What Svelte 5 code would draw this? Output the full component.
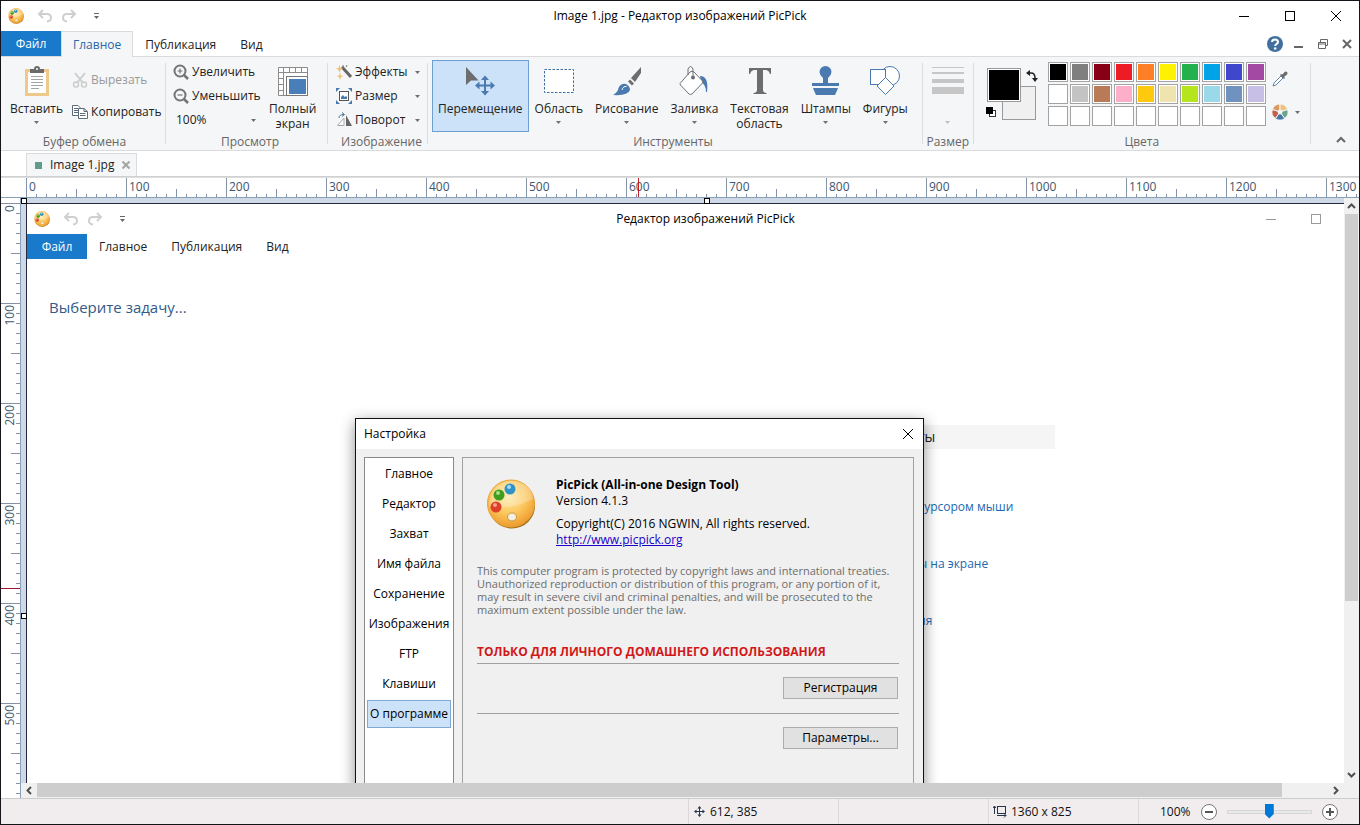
<script>
  const paletteRows = [
    ['#000000', '#7f7f7f', '#880015', '#ed1c24', '#ff7f27', '#fff200', '#22b14c', '#00a2e8', '#3f48cc', '#a349a4'],
    ['#ffffff', '#c3c3c3', '#b97a57', '#ffaec9', '#ffc90e', '#efe4b0', '#b5e61d', '#99d9ea', '#7092be', '#c8bfe7'],
    ['#ffffff', '#ffffff', '#ffffff', '#ffffff', '#ffffff', '#ffffff', '#ffffff', '#ffffff', '#ffffff', '#ffffff']
  ];
  const tools = [
    { id: 'move', label: 'Перемещение', active: true, menu: false },
    { id: 'region', label: 'Область', menu: true },
    { id: 'brush', label: 'Рисование', menu: true },
    { id: 'fill', label: 'Заливка', menu: true },
    { id: 'text', label: 'Текстовая область', menu: false },
    { id: 'stamp', label: 'Штампы', menu: true },
    { id: 'shapes', label: 'Фигуры', menu: true }
  ];
  const sections = ['Главное', 'Редактор', 'Захват', 'Имя файла', 'Сохранение', 'Изображения', 'FTP', 'Клавиши', 'О программе'];
  let workWidth = $state(0);
  let workHeight = $state(0);
  let zoom = $state(50);
  const range = (n) => Array.from({ length: Math.max(0, n) }, (_, i) => i);
  const columns = $derived(range(Math.ceil((workWidth - 25) / 10)));
  const rows = $derived(range(Math.ceil((workHeight - 26) / 10)));
  const tickSize = (i) => (i % 10 === 0 ? 20 : i % 5 === 0 ? 9 : 4);
</script>

{#snippet palette(size)}
  <svg width={size} height={size} viewBox="0 0 50 50" aria-hidden="true">
    <defs>
      <radialGradient id="gold" cx="45%" cy="35%" r="65%">
        <stop offset="0" stop-color="#ffe9a8" />
        <stop offset="0.55" stop-color="#fbc860" />
        <stop offset="1" stop-color="#ee9b2c" />
      </radialGradient>
    </defs>
    <ellipse cx="26" cy="27" rx="23" ry="22.500" fill="#a8701c" />
    <circle cx="25" cy="24.500" r="23.500" fill="url(#gold)" stroke="#e9a236" />
    <path d="M3 27 Q24 32 47 20 Q46 3 25 2 Q5 4 3 27Z" fill="#fff" opacity=".25" />
    <ellipse cx="26" cy="38" rx="4.500" ry="4" fill="#f4efe2" stroke="#c79a48" />
    <circle cx="24" cy="10" r="5.500" fill="#2f93c8" /><circle cx="23" cy="8" r="2" fill="#a9dcf2" />
    <circle cx="13" cy="16" r="5.500" fill="#3f9e1f" /><circle cx="12" cy="14" r="2" fill="#a5dd84" />
    <circle cx="10" cy="28" r="5.500" fill="#dd4029" /><circle cx="9" cy="26" r="2" fill="#f7a08e" />
  </svg>
{/snippet}

{#snippet undo()}
  <svg width="16" height="14" viewBox="0 0 16 14" fill="none" stroke="#cfcfcf" stroke-width="2" aria-hidden="true">
    <path d="M6 1 L2 5 L6 9 M2 5 H10 Q14 5 14 9 Q14 12 10 12.500" />
  </svg>
{/snippet}

{#snippet redo()}
  <svg width="16" height="14" viewBox="0 0 16 14" fill="none" stroke="#cfcfcf" stroke-width="2" aria-hidden="true">
    <path d="M10 1 L14 5 L10 9 M14 5 H6 Q2 5 2 9 Q2 12 6 12.500" />
  </svg>
{/snippet}

{#snippet quick()}
  <div class="quick">
    {@render palette(16)}
    <button aria-label="Отменить">{@render undo()}</button>
    <button aria-label="Повторить">{@render redo()}</button>
    <button class="more" aria-label="Настроить панель">
      <svg width="7" height="7" viewBox="0 0 7 7" aria-hidden="true"><path d="M1 .5H6" stroke="#666" /><path d="M1 3H6L3.500 6Z" fill="#666" /></svg>
    </button>
  </div>
{/snippet}

{#snippet arrow()}
  <svg class="arrow" width="5" height="3" viewBox="0 0 5 3" aria-hidden="true"><path d="M0 0H5L2.500 3Z" fill="currentColor" /></svg>
{/snippet}

{#snippet toolIcon(id)}
  <svg width="32" height="32" viewBox="0 0 32 32" aria-hidden="true">
    {#if id === 'move'}
      <path d="M2 2 V20 L7 15.500 H14.500Z" fill="#6d6d6d" />
      <path d="M21 13V28 M13.500 20.500H29" stroke="#4a7ab0" stroke-width="2" />
      <path d="M21 10.500 L25 15H17Z M21 30.500 L25 26H17Z M11 20.500 L15.500 16.500V24.500Z M31 20.500 L26.500 16.500V24.500Z" fill="#4a7ab0" />
    {:else if id === 'region'}
      <rect x="1.500" y="4.500" width="29" height="23" fill="#fff" stroke="#3f6fa5" stroke-dasharray="2.500 1.500" />
    {:else if id === 'brush'}
      <path d="M30 2 L20 13 L24 17 L30 8Z M19 14.500 L23 18.500 L21 20.500 L17 16.500Z" fill="#6d6d6d" />
      <path d="M2 30 Q7 27 7.500 23 Q10 18 15 19 Q19 21 19 25 Q17 31 2 30Z" fill="#4a7ab0" />
      <path d="M11 25 Q12 21 15.500 21.500" fill="none" stroke="#fff" />
    {:else if id === 'fill'}
      <path d="M22 11 Q31 11 29 27 H28 Q28 20 23 17Z" fill="#4a7ab0" />
      <path d="M2 18.500 L12 7 Q14 5.500 16 7 L24.500 16 Q25 17.500 24 18.500 L14 29 Q12.500 30 11 29 L2.500 20Z" fill="#fff" stroke="#707070" />
      <path d="M10 10 V4 Q12.500 -1 15 4 V12" fill="none" stroke="#707070" /><circle cx="15" cy="12.500" r="2" fill="#6d6d6d" />
    {:else if id === 'text'}
      <path d="M5 3H27V9H26Q25 5.500 22 5H19V25Q19 27.500 22.500 28V29H9.500V28Q13 27.500 13 25V5H10Q7 5.500 6 9H5Z" fill="#6d6d6d" />
    {:else if id === 'stamp'}
      <path d="M15.500 1A6 6 0 0 1 21.500 7Q21.500 10 18 13V18H29V21H2V18H13V13Q9.500 10 9.500 7A6 6 0 0 1 15.500 1Z M3 23H28Q27 26 25 30H6Q4 26 3 23Z" fill="#4a7ab0" />
    {:else}
      <g fill="#fff" stroke="#4a7ab0"><circle cx="21" cy="11" r="9.500" /><rect x="1.500" y="4.500" width="15" height="15" /><path d="M16.500 12.500 L25 21 L16.500 29.500 L8 21Z" /></g>
    {/if}
  </svg>
{/snippet}

<div class="window">
  <header class="titlebar">
    {@render quick()}
    <h1>Image 1.jpg - Редактор изображений PicPick</h1>
    <div class="controls">
      <button aria-label="Свернуть"><svg width="12" height="12" viewBox="0 0 12 12"><path d="M1 6.500H11" stroke="#000" /></svg></button>
      <button aria-label="Развернуть"><svg width="12" height="12" viewBox="0 0 12 12"><rect x="1.500" y="1.500" width="9" height="9" fill="none" stroke="#000" /></svg></button>
      <button aria-label="Закрыть"><svg width="12" height="12" viewBox="0 0 12 12"><path d="M1 1L11 11M11 1L1 11" stroke="#000" /></svg></button>
    </div>
  </header>

  <nav class="tabs">
    <button class="file">Файл</button>
    <button class="current">Главное</button>
    <button>Публикация</button>
    <button>Вид</button>
    <div class="mdi">
      <button aria-label="Справка">
        <svg width="16" height="16" viewBox="0 0 16 16"><circle cx="8" cy="8" r="8" fill="#41709f" /><path d="M5 6 Q5.200 3.500 8 3.500 Q11 3.500 11 6 Q11 7.300 9.500 8 Q8.200 8.800 8.200 10" fill="none" stroke="#fff" stroke-width="2" /><circle cx="8.200" cy="12.500" r="1.300" fill="#fff" /></svg>
      </button>
      <button aria-label="Свернуть документ"><svg width="10" height="10" viewBox="0 0 10 10"><path d="M0 8H9" stroke="#666" stroke-width="2" /></svg></button>
      <button aria-label="Восстановить документ"><svg width="10" height="10" viewBox="0 0 10 10"><path d="M.5 3.500H7.500V9.500H.5ZM.5 5H7M2.500 3V.5H9.500V6.500H8" fill="none" stroke="#666" /></svg></button>
      <button aria-label="Закрыть документ"><svg width="10" height="10" viewBox="0 0 10 10"><path d="M1 1L9 9M9 1L1 9" stroke="#666" stroke-width="2" /></svg></button>
    </div>
  </nav>

  <div class="ribbon">
    <section class="group clipboard">
      <div class="body">
        <button class="big">
          <svg width="32" height="32" viewBox="0 0 32 32" aria-hidden="true">
            <rect x="5.500" y="5.500" width="21" height="24" fill="#fff" stroke="#efc98c" stroke-width="3" />
            <path d="M9 4H13Q13 1 16 1Q19 1 19 4H23V8H9Z" fill="#6a6a6a" /><circle cx="16" cy="4" r="1" fill="#fff" />
            <path d="M10 11.500H22M10 14.500H22M10 17.500H22M10 20.500H22M10 23.500H18" stroke="#a5a5a5" />
          </svg>
          <span>Вставить</span>
          {@render arrow()}
        </button>
        <div class="stack spaced">
          <button class="small" disabled>
            <svg width="16" height="16" viewBox="0 0 16 16" fill="none" stroke="#cdcdcd" stroke-width="2" aria-hidden="true"><path d="M3 1L11 11M13 1L5 11" /><circle cx="4" cy="12.500" r="2.500" stroke-width="1.500" /><circle cx="12" cy="12.500" r="2.500" stroke-width="1.500" /></svg>
            Вырезать
          </button>
          <button class="small">
            <svg width="16" height="16" viewBox="0 0 16 16" fill="#fff" stroke="#5d6b7a" aria-hidden="true"><path d="M.5 1.500H6L8.500 4V11.500H.5ZM2 4.500H6M2 6.500H6M2 8.500H6" /><path d="M6.500 4.500H12L15.500 7.500V14.500H6.500ZM12 4.500V7.500H15M8 9.500H13.500M8 11.500H13.500" /></svg>
            Копировать
          </button>
        </div>
      </div>
      <h2>Буфер обмена</h2>
    </section>
    <span class="sep"></span>

    <section class="group view">
      <div class="body">
        <div class="stack">
          <button class="small">
            <svg width="16" height="16" viewBox="0 0 16 16" fill="none" stroke="#747474" aria-hidden="true"><circle cx="7" cy="7" r="5.500" stroke-width="2" /><path d="M11 11L15 15" stroke-width="2.500" /><path d="M4.500 7H9.500M7 4.500V9.500" stroke-width="1.200" /></svg>
            Увеличить
          </button>
          <button class="small">
            <svg width="16" height="16" viewBox="0 0 16 16" fill="none" stroke="#747474" aria-hidden="true"><circle cx="7" cy="7" r="5.500" stroke-width="2" /><path d="M11 11L15 15" stroke-width="2.500" /><path d="M4.500 7H9.500" stroke-width="1.200" /></svg>
            Уменьшить
          </button>
          <div class="scale">
            <select aria-label="Масштаб"><option>100%</option></select>
            {@render arrow()}
          </div>
        </div>
        <button class="big">
          <svg width="32" height="32" viewBox="0 0 32 32" aria-hidden="true">
            <path d="M1.500 2.500H30.500V30.500H1.500ZM1.500 7.500H30.500M6.500 2V30M1.500 13.500H6M1.500 19.500H6M1.500 25.500H6M12.500 2V7M18.500 2V7M24.500 2V7" fill="#fff" stroke="#8c8c8c" />
            <rect x="9.500" y="11.500" width="21" height="19" fill="#fff" stroke="#777" /><rect x="12" y="14" width="17" height="15" fill="#4a7eb8" />
          </svg>
          <span>Полный<br />экран</span>
        </button>
      </div>
      <h2>Просмотр</h2>
    </section>
    <span class="sep"></span>

    <section class="group image">
      <div class="body">
        <div class="stack">
          <button class="small menu">
            <svg width="16" height="16" viewBox="0 0 16 16" aria-hidden="true"><path d="M6 3L15 13" stroke="#666" stroke-width="3" /><path d="M7 1V3M11 1L10 3" stroke="#777" /><path d="M3.500 1L4.500 4L7 4.500L4.500 6L3.500 9L2.500 6L0 4.500L2.500 4ZM4 9L5 11.500L7.500 12L5 13L4 16L3 13L.5 12L3 11.500Z" fill="#efbf70" /></svg>
            <span>Эффекты</span>{@render arrow()}
          </button>
          <button class="small menu">
            <svg width="16" height="16" viewBox="0 0 16 16" aria-hidden="true"><rect x="3.500" y="3.500" width="9" height="9" fill="#fff" stroke="#555" /><path d="M5 11V9L7 7L8.500 9L10 8L11 9V11Z" fill="#4a7ab0" /><path d="M0 0H4L0 4ZM16 0H12L16 4ZM0 16H4L0 12ZM16 16H12L16 12Z" fill="#4a7ab0" /></svg>
            <span>Размер</span>{@render arrow()}
          </button>
          <button class="small menu">
            <svg width="16" height="16" viewBox="0 0 16 16" aria-hidden="true"><path d="M10 3V14H16Z" fill="#666" /><path d="M8 6V13.500H1.500Z" fill="#fff" stroke="#aaa" /><path d="M3 6Q3 2.500 8 2.500M6 .5L8.500 2.500L6 4.500" fill="none" stroke="#44749c" /></svg>
            <span>Поворот</span>{@render arrow()}
          </button>
        </div>
      </div>
      <h2>Изображение</h2>
    </section>
    <span class="sep"></span>

    <section class="group tools">
      <div class="body">
        {#each tools as tool}
          <button class="big" class:active={tool.active}>
            {@render toolIcon(tool.id)}
            <span>{#each tool.label.split(' ') as word, i}{#if i > 0}<br />{/if}{word}{/each}</span>
            {#if tool.menu}{@render arrow()}{/if}
          </button>
        {/each}
      </div>
      <h2>Инструменты</h2>
    </section>
    <span class="sep"></span>

    <section class="group width">
      <div class="body">
        <button class="big" disabled aria-label="Толщина линии">
          <svg width="32" height="32" viewBox="0 0 32 32" fill="#c6c6c6" aria-hidden="true"><path d="M0 2H32V3H0ZM0 7H32V9H0ZM0 14H32V18H0ZM0 22H32V29H0Z" /></svg>
          <span>&nbsp;</span>
          {@render arrow()}
        </button>
      </div>
      <h2>Размер</h2>
    </section>
    <span class="sep"></span>

    <section class="group colors">
      <div class="body">
        <div class="current-colors">
          <button class="back" aria-label="Цвет фона"></button>
          <button class="front" aria-label="Основной цвет"></button>
          <button class="swap" aria-label="Поменять цвета"><svg width="12" height="12" viewBox="0 0 12 12"><path d="M3 3H5Q9 3 9 8V9" fill="none" stroke="#222" stroke-width="1.500" /><path d="M0 3L4 0V6ZM9 12L6 8H12Z" fill="#222" /></svg></button>
          <button class="reset" aria-label="Цвета по умолчанию"><svg width="10" height="10" viewBox="0 0 10 10"><rect x="3.500" y="3.500" width="6" height="6" fill="#fff" stroke="#333" /><rect width="7" height="7" fill="#000" /></svg></button>
        </div>
        <div class="swatches">
          {#each paletteRows as row, r}
            {#each row as color, c}
              <button aria-label="Цвет {r * 10 + c + 1}" style="background-color: {color}"></button>
            {/each}
          {/each}
        </div>
        <div class="pickers">
          <button aria-label="Пипетка"><svg width="16" height="16" viewBox="0 0 16 16"><path d="M9 5L11 7L4 14L1 15L2 12Z" fill="#fff" stroke="#5f86aa" /><path d="M8 4L12 8L13 7L12 6L15.500 3Q16 1 14 .5Q12.500 0 11 3L10 3.500L9 3Z" fill="#6b6b6b" /></svg></button>
          <button aria-label="Другие цвета">
            <svg width="16" height="16" viewBox="0 0 16 16" stroke="#f5f6f7"><path d="M8 8V0A8 8 0 0 0 .4 5.500Z" fill="#d99a62" /><path d="M8 8V0A8 8 0 0 1 15.600 5.500Z" fill="#eec27e" /><path d="M8 8L15.600 5.500A8 8 0 0 1 12.700 14.500Z" fill="#6aa58a" /><path d="M8 8L12.700 14.500A8 8 0 0 1 3.300 14.500Z" fill="#4776a8" /><path d="M8 8L3.300 14.500A8 8 0 0 1 .4 5.500Z" fill="#c4604a" /><circle cx="8" cy="8" r="2" fill="#f5f6f7" /></svg>
            {@render arrow()}
          </button>
        </div>
      </div>
      <h2>Цвета</h2>
    </section>
    <span class="sep"></span>
    <button class="collapse" aria-label="Свернуть ленту"><svg width="10" height="7" viewBox="0 0 10 7"><path d="M1 6L5 2L9 6" fill="none" stroke="#666" stroke-width="2" /></svg></button>
  </div>

  <div class="docs">
    <div class="doc">
      <i></i><span>Image 1.jpg</span>
      <button aria-label="Закрыть вкладку"><svg width="8" height="8" viewBox="0 0 8 8"><path d="M.5 .5L7.500 7.500M7.500 .5L.5 7.500" stroke="#a4a4a4" stroke-width="2" /></svg></button>
    </div>
  </div>

  <main class="work" bind:clientWidth={workWidth} bind:clientHeight={workHeight}>
    <svg class="hruler" aria-hidden="true">
      {#each columns as i}
        <path d="M{25.5 + i * 10} 20v-{tickSize(i)}" stroke="#8494a4" />
        {#if i % 10 === 0}<text x={28 + i * 10} y="13">{i * 10}</text>{/if}
      {/each}
      <path d="M637.500 0V20" stroke="#c0202c" />
    </svg>
    <svg class="vruler" aria-hidden="true">
      {#each rows as i}
        <path d="M19 {5.5 + i * 10}h-{tickSize(i)}" stroke="#8494a4" />
        {#if i % 10 === 0}<text x={-7 - i * 10} y="13" text-anchor="end" transform="rotate(-90)">{i * 10}</text>{/if}
      {/each}
      <path d="M0 390.500H19" stroke="#a0142c" />
    </svg>

    <div class="canvas">
      <b class="handle corner"></b><b class="handle top"></b><b class="handle left"></b>
      <div class="picture">
        <div class="titlebar inner">
          {@render quick()}
          <h3>Редактор изображений PicPick</h3>
          <div class="controls">
            <svg width="12" height="12" viewBox="0 0 12 12"><path d="M1 6.500H11" stroke="#999" /></svg>
            <svg width="12" height="12" viewBox="0 0 12 12"><rect x="1.500" y="1.500" width="9" height="9" fill="none" stroke="#999" /></svg>
          </div>
        </div>
        <div class="tabs inner">
          <button class="file">Файл</button><button>Главное</button><button>Публикация</button><button>Вид</button>
        </div>
        <h2 class="task">Выберите задачу...</h2>
        <div class="tasks">
          <h3>ты</h3>
          <a href="#cursor">курсором мыши</a>
          <a href="#screen">ы на экране</a>
          <a href="#more">ия</a>
        </div>

        <div class="dialog" role="dialog" aria-label="Настройка">
          <div class="dialog-head">
            <span>Настройка</span>
            <button aria-label="Закрыть окно"><svg width="12" height="12" viewBox="0 0 12 12"><path d="M1 1L11 11M11 1L1 11" stroke="#000" /></svg></button>
          </div>
          <div class="dialog-body">
            <div class="list">
              {#each sections as name}
                <button class:selected={name === 'О программе'}>{name}</button>
              {/each}
            </div>
            <div class="about">
              <div class="product">
                {@render palette(50)}
                <div>
                  <p><strong>PicPick (All-in-one Design Tool)</strong></p>
                  <p>Version 4.1.3</p>
                  <p class="copy">Copyright(C) 2016 NGWIN, All rights reserved.</p>
                  <p><a href="http://www.picpick.org">http://www.picpick.org</a></p>
                </div>
              </div>
              <p class="legal">This computer program is protected by copyright laws and international treaties.<br />Unauthorized reproduction or distribution of this program, or any portion of it,<br />may result in severe civil and criminal penalties, and will be prosecuted to the<br />maximum extent possible under the law.</p>
              <p class="notice">ТОЛЬКО ДЛЯ ЛИЧНОГО ДОМАШНЕГО ИСПОЛЬЗОВАНИЯ</p>
              <div class="action"><button>Регистрация</button></div>
              <div class="action"><button>Параметры...</button></div>
            </div>
          </div>
        </div>
      </div>
    </div>

    <div class="vscroll">
      <button aria-label="Вверх"><svg width="9" height="6" viewBox="0 0 9 6"><path d="M1 5L4.500 1.500L8 5" /></svg></button>
      <div class="rail"><i></i></div>
      <button aria-label="Вниз"><svg width="9" height="6" viewBox="0 0 9 6"><path d="M1 1L4.500 4.500L8 1" /></svg></button>
    </div>
    <div class="hscroll">
      <button aria-label="Влево"><svg width="6" height="9" viewBox="0 0 6 9"><path d="M5 1L1.500 4.500L5 8" /></svg></button>
      <div class="rail"><i></i></div>
      <button aria-label="Вправо"><svg width="6" height="9" viewBox="0 0 6 9"><path d="M1 1L4.500 4.500L1 8" /></svg></button>
    </div>
  </main>

  <footer>
    <div class="cell">
      <svg width="12" height="12" viewBox="0 0 12 12" fill="none" stroke="#26364a"><path d="M5.500 1V10M1 5.500H10" /><path d="M5.500 0L7.500 2.500H3.500ZM5.500 11L7.500 8.500H3.500ZM0 5.500L2.500 3.500V7.500ZM11 5.500L8.500 3.500V7.500Z" fill="#26364a" stroke="none" /></svg>
      612, 385
    </div>
    <div class="cell"></div>
    <div class="cell">
      <svg width="14" height="13" viewBox="0 0 14 13" fill="none" stroke="#26364a"><rect x="4.500" y="1.500" width="8" height="7" /><path d="M1.500 1V9M0 3L1.500 1L3 3M4 10.500H13M11 8.500L13 10.500L11 12.500" /></svg>
      1360 x 825
    </div>
    <div class="cell zoom">
      <label for="zoom">100%</label>
      <button aria-label="Мельче"><svg width="16" height="16" viewBox="0 0 16 16" fill="none" stroke="#777"><circle cx="8" cy="8" r="7.500" fill="#fff" /><path d="M4 8H12" stroke="#555" stroke-width="2" /></svg></button>
      <input id="zoom" type="range" min="0" max="100" bind:value={zoom} />
      <button aria-label="Крупнее"><svg width="16" height="16" viewBox="0 0 16 16" fill="none" stroke="#777"><circle cx="8" cy="8" r="7.500" fill="#fff" /><path d="M4 8H12M8 4V12" stroke="#555" stroke-width="2" /></svg></button>
    </div>
  </footer>
</div>

<style>
  * { box-sizing: border-box; }
  svg { display: block; flex: none; }
  button { font: inherit; color: inherit; padding: 0; border: 0; background: none; }
  h1, h2, h3, p { margin: 0; font: inherit; }

  .window {
    display: flex;
    flex-direction: column;
    height: 100vh;
    border: 1px solid #14141a;
    background: #fff;
    color: #222;
    font: 12px/16px "Open Sans", "Noto Sans", sans-serif;
    overflow: hidden;
  }

  .titlebar { display: grid; grid-template-columns: 1fr auto 1fr; align-items: center; height: 30px; flex: none; color: #000; }
  .quick { display: flex; align-items: center; gap: 8px; padding-left: 7px; }
  .quick button { display: flex; }
  .quick button:nth-of-type(1) { margin-left: 5px; }
  .quick .more { margin-left: 8px; }
  .controls { display: flex; justify-content: flex-end; }
  .controls button { display: grid; place-items: center; width: 46px; height: 30px; }

  .tabs { display: flex; height: 26px; flex: none; border-bottom: 1px solid #dadbdc; }
  .tabs > button { height: 26px; padding: 0 11px; border: 1px solid transparent; border-bottom: 0; }
  .tabs > .file { width: 60px; height: 25px; padding: 0; background: #1979ca; border: 0; color: #fff; }
  .tabs > .current { background: #f5f6f7; border-color: #dadbdc; color: #2a66a8; }
  .mdi { display: flex; gap: 14px; align-items: center; margin-left: auto; padding-right: 7px; }
  .mdi button:first-child { margin-right: -3px; }

  .ribbon { display: flex; flex: none; height: 94px; background: #f5f6f7; border-bottom: 1px solid #dadbdc; }
  .sep { flex: none; width: 1px; margin: 6px 0; background: #dcdddf; }
  .group { display: flex; flex-direction: column; padding-top: 3px; }
  .group h2 { line-height: 16px; text-align: center; color: #666; }
  .body { display: flex; height: 74px; align-items: flex-start; }
  .big { display: flex; flex-direction: column; align-items: center; height: 72px; padding: 4px 5px 0; border: 1px solid transparent; line-height: 15px; white-space: nowrap; }
  .big span { margin-top: 4px; }
  .big .arrow { margin-top: 5px; }
  .active { background: #cbe2f9; border-color: #6f9fd0; }
  .arrow { color: #707070; }
  .stack { display: flex; flex-direction: column; }
  .spaced { gap: 8px; padding-top: 8px; }
  .small { display: flex; align-items: center; gap: 3px; height: 24px; white-space: nowrap; }
  .small:disabled { color: #9a9a9a; }
  .menu span { flex: 1; text-align: left; }
  .clipboard { width: 164px; padding-left: 3px; }
  .clipboard .stack { padding-left: 3px; }
  .view { width: 161px; padding-left: 7px; }
  .view .stack { width: 90px; }
  .image { width: 99px; padding-left: 8px; }
  .image .stack { width: 84px; }
  .scale { display: flex; align-items: center; height: 24px; padding: 0 7px 0 3px; }
  .scale select { flex: 1; width: 60px; padding: 0; border: 0; appearance: none; background: none; font: inherit; color: inherit; }
  .tools { padding-left: 4px; padding-right: 8px; }
  .width { width: 50px; }
  .width .body { justify-content: center; }
  .width .arrow { color: #c0c0c0; }

  .colors { width: 336px; }
  .colors .body { gap: 12px; padding: 2px 10px 0 12px; }
  .current-colors { position: relative; width: 50px; height: 60px; }
  .current-colors button { position: absolute; }
  .front { left: 1px; top: 6px; width: 34px; height: 34px; background: #000; border: 1px solid #999; outline: 1px solid #fff; outline-offset: -2px; }
  .back { left: 16px; top: 24px; width: 34px; height: 34px; background: #f0f0f0; border: 1px solid #999; }
  .swap { left: 40px; top: 8px; }
  .reset { left: 0; top: 45px; }
  .swatches { display: grid; grid-template-columns: repeat(10, 20px); grid-auto-rows: 20px; gap: 2px; }
  .swatches button { padding: 1px; border: 1px solid #a3a3a3; background-clip: content-box; background-color: #fff; box-shadow: inset 0 0 0 1px #fff; }
  .pickers { display: flex; flex-direction: column; gap: 17px; padding-top: 9px; margin-left: -6px; }
  .pickers button { display: flex; align-items: center; gap: 7px; }
  .collapse { align-self: flex-end; margin: 0 13px 7px auto; }

  .docs { flex: none; height: 26px; padding: 2px 0 0 25px; border-bottom: 1px solid #d0d0d0; }
  .doc { display: flex; align-items: center; width: 111px; height: 23px; padding: 0 6px 0 8px; background: #f5f6f7; border: 1px solid #dadbdc; border-bottom: 0; }
  .doc i { width: 7px; height: 7px; background: #5f9d8c; }
  .doc span { margin-left: 8px; }
  .doc button { margin-left: auto; }

  .work { flex: 1; min-height: 0; display: grid; grid-template: 21px minmax(0, 1fr) 15px / 20px minmax(0, 1fr) 15px; border-bottom: 1px solid #ccc; }
  .hruler { grid-area: 1 / 1 / 2 / 4; width: 100%; height: 21px; border-bottom: 1px solid #8aa0b8; border-top: 1px solid #ddd; }
  .vruler { grid-area: 2 / 1 / 4 / 2; width: 20px; height: 100%; border-right: 1px solid #8aa0b8; }
  text { font-size: 12px; fill: #3e5670; }
  .canvas { position: relative; grid-area: 2 / 2; min-width: 0; padding: 5px 0 0 5px; background: #cfd8e6; overflow: hidden; }
  .picture { position: relative; height: 100%; border: solid #242a3c; border-width: 1px 0 0 1px; background: #fff; overflow: hidden; }
  .handle { position: absolute; z-index: 1; width: 6px; height: 6px; background: #fff; border: 1px solid #000; }
  .corner { left: 0; top: 0; }
  .top { left: 683px; top: 0; }
  .left { left: 0; top: 415px; }

  .inner.tabs { height: 25px; border: 0; }
  .inner.tabs button { height: 25px; }
  .inner h3 { padding-left: 40px; }
  .inner .controls { gap: 33px; padding-right: 22px; }
  .task { margin: 36px 0 0 22px; font-size: 15px; line-height: 24px; color: #335a88; }
  .tasks { display: flex; flex-direction: column; margin: 106px 0 0 891px; }
  .tasks h3 { width: 137px; height: 24px; font-size: 14px; line-height: 24px; background: #f5f5f5; }
  .tasks a { height: 16px; margin-top: 41px; color: #2069b0; text-decoration: none; }
  .tasks h3 + a { margin-top: 50px; }

  .dialog { position: absolute; left: 328px; top: 214px; width: 569px; height: 420px; display: flex; flex-direction: column; border: 1px solid #111; background: #f0f0f0; color: #000; box-shadow: 0 4px 14px rgba(0, 0, 0, 0.45); }
  .dialog-head { display: flex; align-items: center; justify-content: space-between; height: 30px; padding: 0 9px 0 8px; background: #fff; }
  .dialog-body { flex: 1; display: flex; gap: 8px; padding: 8px 9px 8px 8px; }
  .list { display: flex; flex-direction: column; gap: 2px; width: 90px; padding: 2px; border: 1px solid #8a8a8a; background: #fff; }
  .list button { height: 28px; border: 1px solid transparent; white-space: nowrap; }
  .list .selected { background: #cbe2f9; border-color: #7fa9d4; }
  .about { flex: 1; padding: 18px 14px; border: 1px solid #a0a0a0; }
  .product { display: flex; gap: 20px; padding: 1px 0 0 9px; }
  .product > :global(svg) { margin-top: 2px; }
  .copy { margin-top: 7px; }
  .product a { color: #1a00c8; }
  .legal { margin-top: 16px; font-size: 11px; line-height: 13px; color: #6d6d6d; white-space: nowrap; }
  .notice { margin-top: 28px; height: 19px; font-weight: bold; color: #d01818; white-space: nowrap; }
  .action { display: flex; justify-content: flex-end; height: 50px; padding: 13px 1px 0 0; border-top: 1px solid #a0a0a0; }
  .action button { width: 115px; height: 22px; background: #e1e1e1; border: 1px solid #adadad; }

  .vscroll { grid-area: 2 / 3; display: flex; flex-direction: column; background: #f0f0f0; }
  .hscroll { grid-area: 3 / 2 / 4 / 4; display: flex; background: #f0f0f0; padding-right: 15px; }
  .vscroll button, .hscroll button { flex: none; display: grid; place-items: center; width: 15px; height: 16px; }
  .hscroll button { height: 15px; width: 16px; }
  .vscroll svg, .hscroll svg { fill: none; stroke: #505050; stroke-width: 2; }
  .rail { flex: 1; }
  .rail i { display: block; background: #cdcdcd; }
  .vscroll .rail i { height: 70%; margin: 0 1px; }
  .hscroll .rail i { height: 14px; margin-right: 46px; }

  footer { flex: none; display: flex; justify-content: flex-end; height: 25px; background: #f1edee; }
  .cell { display: flex; align-items: center; gap: 4px; width: 150px; padding-left: 5px; border-left: 1px solid #dcd8da; color: #111; white-space: nowrap; }
  .cell:nth-child(3) { padding-left: 4px; }
  .zoom { width: 221px; padding: 0 21px; gap: 10px; }
  .zoom input { flex: 1; min-width: 0; height: 16px; margin: 0; appearance: none; background: none; }
  .zoom input::-webkit-slider-runnable-track { height: 4px; background: #e7eaea; border: 1px solid #d6d6d6; }
  .zoom input::-webkit-slider-thumb { appearance: none; width: 9px; height: 15px; margin-top: -7px; background: #0078d7; clip-path: polygon(0 0, 100% 0, 100% 70%, 50% 100%, 0 70%); }
</style>
